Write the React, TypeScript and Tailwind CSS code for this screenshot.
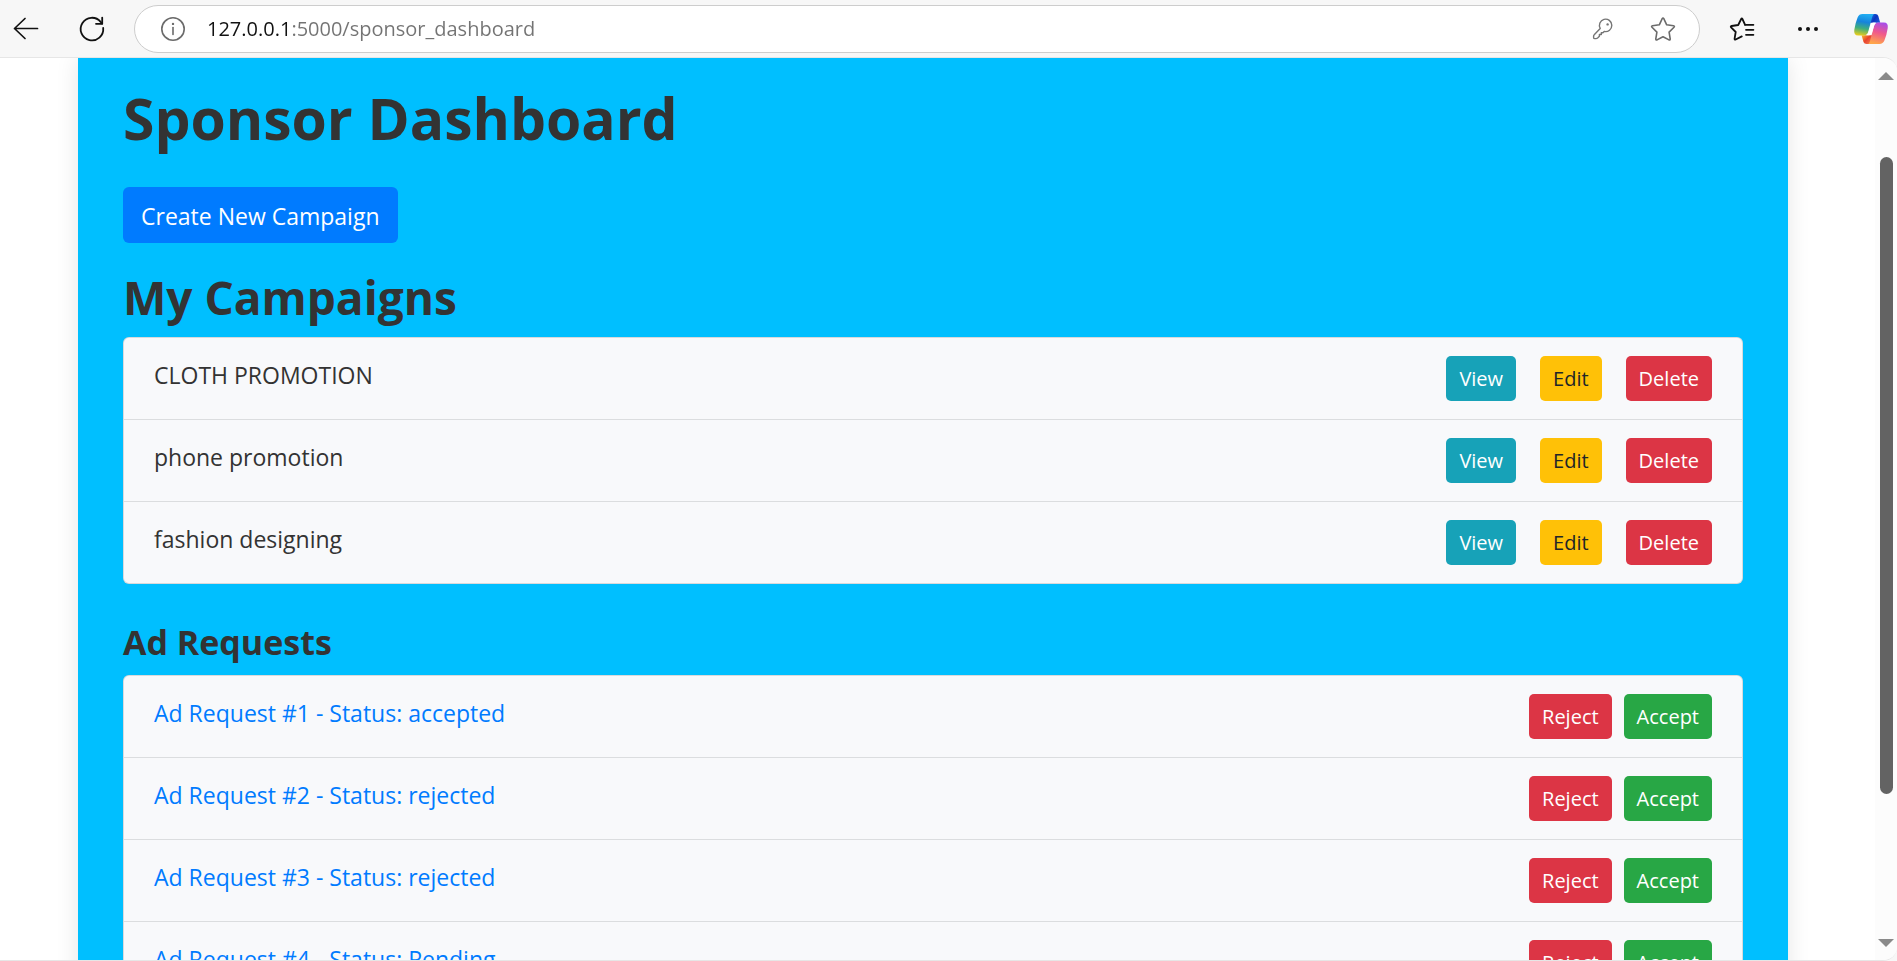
import type { ReactNode } from "react";

const campaigns = ["CLOTH PROMOTION", "phone promotion", "fashion designing"];

const adRequests = [
  { id: 1, status: "accepted" },
  { id: 2, status: "rejected" },
  { id: 3, status: "rejected" },
  { id: 4, status: "Pending" },
];

const tones = {
  info: "bg-[#17a2b8] text-white",
  warning: "bg-[#ffc107] text-[#212529]",
  danger: "bg-[#dc3545] text-white",
  success: "bg-[#28a745] text-white",
};

function ActionButton({ tone, children }: { tone: keyof typeof tones; children: ReactNode }) {
  return (
    <button type="button" className={`h-[45px] rounded-[5px] px-[13px] text-[20px] leading-[32px] ${tones[tone]}`}>
      {children}
    </button>
  );
}

function List({ children }: { children: ReactNode }) {
  return (
    <ul className="divide-y divide-[#dbdddf] rounded-[6px] border border-black/12 bg-[#f8f9fb]">
      {children}
    </ul>
  );
}

function Row({ label, children }: { label: ReactNode; children: ReactNode }) {
  return (
    <li className="flex items-start justify-between px-[30px] py-[18px] text-[23px] leading-[38px]">
      {label}
      {children}
    </li>
  );
}

function BackIcon() {
  return (
    <svg width="28" height="28" viewBox="0 0 28 28" fill="none" stroke="#111" strokeWidth="1.7" strokeLinecap="round" strokeLinejoin="round">
      <path d="M25.5 13.5H2.5M13 3.5L2.5 13.5L13 23.5" />
    </svg>
  );
}

function ReloadIcon() {
  return (
    <svg width="28" height="28" viewBox="0 0 28 28" fill="none" stroke="#111" strokeWidth="1.8" strokeLinecap="round" strokeLinejoin="round">
      <path d="M25.2 13A11.3 11.3 0 1 1 22.6 6.8L24.2 8.6" />
      <path d="M24.2 2.6V8.8H18" />
    </svg>
  );
}

function InfoIcon() {
  return (
    <svg width="28" height="28" viewBox="0 0 28 28" fill="none" stroke="#6b6b6b" strokeWidth="1.6" strokeLinecap="round">
      <circle cx="14" cy="14" r="11.2" />
      <path d="M14 12.5V19.5" />
      <circle cx="14" cy="8.9" r="1.2" fill="#6b6b6b" stroke="none" />
    </svg>
  );
}

function KeyIcon() {
  return (
    <svg width="24" height="24" viewBox="0 0 24 24" fill="none" stroke="#757575" strokeWidth="1.4" strokeLinejoin="round">
      <path d="M9.2 11.4A6.2 6.2 0 1 1 13.2 14.4L11.9 15.7H10.3V17.5H8.4V19.3L6.6 21Q5.9 21.6 5 21.6H3.8Q2.6 21.6 2.6 20.4V19.2Q2.6 18.4 3.2 17.8Z" />
      <circle cx="16.6" cy="7.4" r="1.2" fill="#757575" stroke="none" />
    </svg>
  );
}

function StarIcon() {
  return (
    <svg width="28" height="28" viewBox="0 0 28 28" fill="none" stroke="#6b6b6b" strokeWidth="1.6" strokeLinejoin="round">
      <path d="M13.2 3.7Q14 2.2 14.8 3.7L17.7 9.8L24.5 10.8Q26 11.1 25 12.3L20.1 17.1L21.2 23.9Q21.3 25.4 20 24.9L14 21.7L8 24.9Q6.7 25.4 6.8 23.9L7.9 17.1L3 12.3Q2 11.1 3.5 10.8L10.3 9.8Z" />
    </svg>
  );
}

function FavoritesIcon() {
  return (
    <svg width="28" height="28" viewBox="0 0 28 28" fill="none" stroke="#111" strokeWidth="1.8" strokeLinecap="round" strokeLinejoin="round">
      <path d="M17 9.6L14.4 4Q13.8 2.8 13.2 4L10.2 10L3.6 11Q2.2 11.3 3.1 12.4L7.7 17L6.6 23.6Q6.4 25 7.7 24.5L13.8 21.4" />
      <path d="M17 9.8H25.4M18 14.8H25.4M18 19.8H25.4" />
    </svg>
  );
}

function MoreIcon() {
  return (
    <svg width="28" height="28" viewBox="0 0 28 28" fill="#111">
      <circle cx="6" cy="14" r="2" />
      <circle cx="14" cy="14" r="2" />
      <circle cx="22" cy="14" r="2" />
    </svg>
  );
}

function CopilotIcon() {
  return (
    <svg width="36" height="32" viewBox="0 0 36 32" fill="none">
      <defs>
        <linearGradient id="cp-left" x1="11" y1="1" x2="7" y2="23" gradientUnits="userSpaceOnUse">
          <stop offset="0" stopColor="#22aef2" />
          <stop offset="0.35" stopColor="#1683dc" />
          <stop offset="0.65" stopColor="#3fae7c" />
          <stop offset="1" stopColor="#f5cf14" />
        </linearGradient>
        <linearGradient id="cp-top" x1="17" y1="3" x2="26" y2="9" gradientUnits="userSpaceOnUse">
          <stop offset="0" stopColor="#1a6fe0" />
          <stop offset="0.5" stopColor="#0b35bf" />
          <stop offset="1" stopColor="#1b57d8" />
        </linearGradient>
        <linearGradient id="cp-right" x1="30" y1="9" x2="24" y2="31" gradientUnits="userSpaceOnUse">
          <stop offset="0" stopColor="#a24cf0" />
          <stop offset="0.5" stopColor="#f0588c" />
          <stop offset="1" stopColor="#ffa64a" />
        </linearGradient>
        <linearGradient id="cp-bottom" x1="10" y1="23" x2="17" y2="30" gradientUnits="userSpaceOnUse">
          <stop offset="0" stopColor="#f5a02c" />
          <stop offset="0.5" stopColor="#e8432c" />
          <stop offset="1" stopColor="#f0704a" />
        </linearGradient>
      </defs>
      <path d="M14 1H22.5Q24.6 1 25.3 3L27.2 9.8H16Z" fill="url(#cp-top)" />
      <path d="M21 31H13.5Q11.2 31 10.5 29L8.6 22.2H20Z" fill="url(#cp-bottom)" />
      <path d="M9.5 1H21Q19.8 1.8 19.2 4L15.2 18.8Q14.2 22.6 10.6 22.6H5.2Q.4 22.6 1.3 16.8Q2.4 9.6 4.6 4.4Q6 1 9.5 1Z" fill="url(#cp-left)" />
      <path d="M26.5 31H15.4Q16.4 30.2 17 28L21 13.2Q22 9.4 25.6 9.4H30.8Q35.6 9.4 34.7 15.2Q33.6 22.4 31.4 27.6Q30 31 26.5 31Z" fill="url(#cp-right)" />
      <path d="M23 9.6H20.4Q18.4 9.6 17.8 11.6L15.4 19.6Q14.8 21.4 13.2 22.3H16Q18.2 22.3 18.8 20.3L21.2 12.2Q21.7 10.5 23 9.6Z" fill="#fff" />
    </svg>
  );
}

function IconButton({ label, children }: { label: string; children: ReactNode }) {
  return (
    <button type="button" aria-label={label} className="shrink-0">
      {children}
    </button>
  );
}

function Toolbar() {
  return (
    <header className="flex h-[57px] shrink-0 items-center pr-[8px] pl-[12px]">
      <div className="flex gap-[38px]">
        <IconButton label="Back"><BackIcon /></IconButton>
        <IconButton label="Refresh"><ReloadIcon /></IconButton>
      </div>
      <div className="mr-[28px] ml-[28px] flex h-[48px] flex-1 items-center rounded-full border border-[#cdcdcd] bg-white pr-[22px] pl-[24px]">
        <IconButton label="View site information"><InfoIcon /></IconButton>
        <input
          type="text"
          aria-label="Address"
          defaultValue="127.0.0.1:5000/sponsor_dashboard"
          className="ml-[20px] min-w-0 flex-1 bg-[linear-gradient(to_right,#111_82px,#737373_82px)] bg-clip-text text-[20px] leading-[32px] text-transparent outline-none"
        />
        <div className="flex items-center gap-[34px]">
          <IconButton label="Saved passwords"><KeyIcon /></IconButton>
          <IconButton label="Add to favorites"><StarIcon /></IconButton>
        </div>
      </div>
      <div className="flex items-center gap-[31px]">
        <div className="flex gap-[38px]">
          <IconButton label="Favorites"><FavoritesIcon /></IconButton>
          <IconButton label="Settings and more"><MoreIcon /></IconButton>
        </div>
        <IconButton label="Copilot"><CopilotIcon /></IconButton>
      </div>
    </header>
  );
}

function Scrollbar() {
  return (
    <div aria-hidden="true" className="flex w-[22px] shrink-0 flex-col items-center bg-[#fcfcfc] pt-[14px] pb-[13px]">
      <svg width="16" height="8" viewBox="0 0 16 8" fill="#8a8a8a"><path d="M8 0L16 8H0Z" /></svg>
      <div className="flex w-full flex-1 flex-col items-center pt-[77px] pb-[145px]">
        <div className="w-[13px] flex-1 rounded-full bg-[#636363]" />
      </div>
      <svg width="16" height="8" viewBox="0 0 16 8" fill="#8a8a8a"><path d="M0 0H16L8 8Z" /></svg>
    </div>
  );
}

export default function App() {
  return (
    <div className="flex h-screen flex-col bg-[#f7f7f7] font-['Open_Sans','Noto_Sans',sans-serif] text-[#333]">
      <Toolbar />
      <div className="flex min-h-0 flex-1 overflow-hidden rounded-r-[14px] border-y border-[#e6e6e6] bg-white">
        <main className="min-w-0 flex-1 overflow-y-auto pr-[87px] pl-[78px] [scrollbar-width:none]">
          <div className="bg-[#00bfff] px-[45px] pt-[24px] pb-[45px] shadow-[0_0_22px_rgba(0,0,0,0.1)]">
            <h1 className="text-[57px] leading-[72px] font-bold">Sponsor Dashboard</h1>
            <button type="button" className="mt-[33px] block h-[56px] rounded-[6px] bg-[#007bff] px-[18px] pt-[2px] text-[23px] leading-[36px] text-white">
              Create New Campaign
            </button>

            <h2 className="mt-[25px] mb-[11px] text-[46px] leading-[58px] font-bold">My Campaigns</h2>
            <List>
              {campaigns.map((name) => (
                <Row key={name} label={<span>{name}</span>}>
                  <div className="flex gap-[24px]">
                    <ActionButton tone="info">View</ActionButton>
                    <ActionButton tone="warning">Edit</ActionButton>
                    <ActionButton tone="danger">Delete</ActionButton>
                  </div>
                </Row>
              ))}
            </List>

            <h3 className="mt-[37px] mb-[11px] text-[34px] leading-[43px] font-bold">Ad Requests</h3>
            <List>
              {adRequests.map(({ id, status }) => (
                <Row
                  key={id}
                  label={
                    <a href={`#ad-request-${id}`} className="text-[#007bff]">
                      Ad Request #{id} - Status: {status}
                    </a>
                  }
                >
                  <div className="flex gap-[12px]">
                    <ActionButton tone="danger">Reject</ActionButton>
                    <ActionButton tone="success">Accept</ActionButton>
                  </div>
                </Row>
              ))}
            </List>
          </div>
        </main>
        <Scrollbar />
      </div>
    </div>
  );
}
